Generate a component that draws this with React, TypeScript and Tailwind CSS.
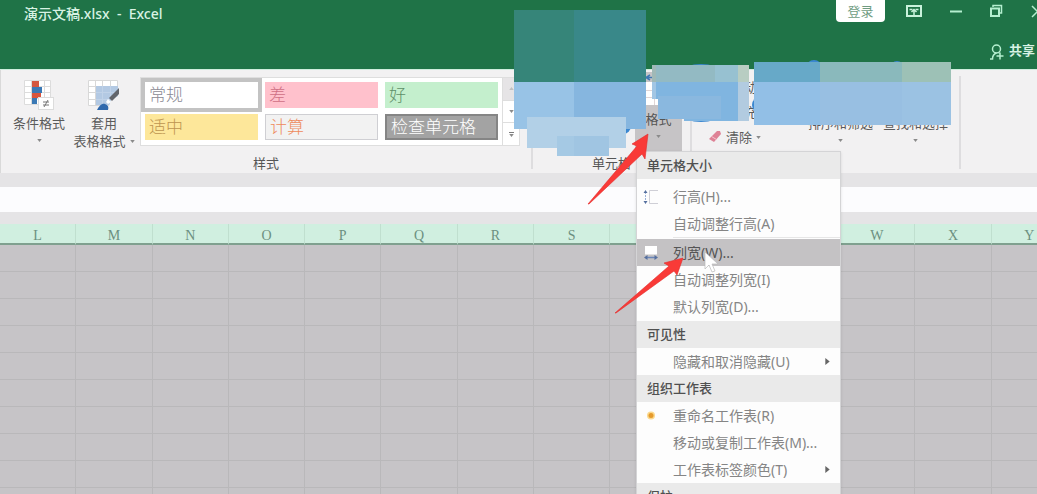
import React from 'react';

const sans = "font-['Noto_Sans','Noto_Sans_CJK_SC',sans-serif]";

const columns = ['L', 'M', 'N', 'O', 'P', 'Q', 'R', 'S', 'T', 'U', 'V', 'W', 'X', 'Y'];

const cellStyles = [
  { name: '常规', look: 'bg-white text-[#8a8a94] outline-4 outline-[#c3c3c3]' },
  { name: '差', look: 'bg-[#ffc1cc] text-[#cf6f84]' },
  { name: '好', look: 'bg-[#c4efcd] text-[#5f8f68]' },
  { name: '适中', look: 'bg-[#fde79a] text-[#bd9550]' },
  { name: '计算', look: 'border border-[#cfcfd3] bg-[#f2f2f2] text-[#ee8a5c]' },
  { name: '检查单元格', look: 'border-2 border-[#858585] bg-[#a3a3a3] text-white' },
];

function Caret() {
  return (
    <svg viewBox="0 0 6 4" className="h-[3px] w-[5px] shrink-0" aria-hidden="true">
      <path d="M0 0h6L3 4z" fill="#8a8a8a" />
    </svg>
  );
}

function ConditionalIcon() {
  return (
    <svg viewBox="0 0 30 30" className="h-[30px] w-[30px]" aria-hidden="true">
      <rect x="0.5" y="0.5" width="26" height="24" fill="#fff" />
      <path d="M0.5 .5h26v24H.5zM.5 6.5h26M.5 12.5h26M.5 18.5h26M7.5 .5v24M20.5 .5v24" fill="none" stroke="#dcdcdc" />
      <path d="M8 1h7v6H8z" fill="#d4573f" />
      <path d="M8 7h10v6H8z" fill="#3b79b5" />
      <path d="M8 13h9v5H8z" fill="#d9553d" />
      <path d="M8 18h5v6H8z" fill="#3b79b5" />
      <rect x="14.5" y="17.500" width="15" height="12" fill="#fff" stroke="#dcdcdc" />
      <path d="M19 22h6M19 25h6M24 20l-4 7" stroke="#777" fill="none" />
    </svg>
  );
}

function TableFormatIcon() {
  return (
    <svg viewBox="0 0 32 30" className="h-[30px] w-8" aria-hidden="true">
      <rect x="0.5" y="0.5" width="29" height="25" fill="#fff" />
      <path d="M.5 .5h29v25H.5zM.5 6.5h29M.5 12.5h29M.5 19.5h29M7.5 .5v25M14.5 .5v25M22.5 .5v25" fill="none" stroke="#d8d8d8" />
      <path d="M8 6h22v19H8z" fill="#b3c9e3" />
      <path d="M8 12.500h22M8 19.500h22M14.500 6v19M22.500 6v19" stroke="#c0d2e8" />
      <path d="M23 20l7-4v10h-9z" fill="#f2f1f2" />
      <path d="M31 8v6L24 21l-3-3z" fill="#63666c" />
      <path d="M20 19l3 3-3 2-2-2z" fill="#fff" />
      <path d="M9 30c2-4 5-7 8-6 3 1 4 3 3 6z" fill="#2f69ad" />
    </svg>
  );
}

function Bar({ className }: { className: string }) {
  return <div className={`w-0.5 shrink-0 bg-[#dedddf] ${className}`} />;
}

function TitleBar() {
  return (
    <header className="flex h-[69px] shrink-0 flex-col bg-[#1f7347] text-white">
      <div className="flex h-[27px] items-center pl-6">
        <h1 className="whitespace-pre text-sm font-medium text-[#d8f2e3]">演示文稿.xlsx  -  Excel</h1>
        <div className="ml-auto flex h-full items-start">
          <button className="h-[22px] w-[49px] rounded-b-sm bg-white text-[13px] leading-[22px] text-[#6f9c82]">登录</button>
          <button aria-label="功能区显示选项" className="ml-[21px] mt-1 h-4 w-4">
            <svg viewBox="0 0 16 16" fill="none" stroke="#c9f2dc">
              <rect x="1" y="2" width="14" height="10" strokeWidth="2" />
              <path d="M3.500 5.500h3M9.500 5.500h3" strokeWidth="1.500" />
              <path d="M8 5v6M5.500 8L8 5.500 10.500 8" strokeWidth="1.500" />
            </svg>
          </button>
          <button aria-label="最小化" className="ml-[27px] mt-1 h-4 w-3.5">
            <svg viewBox="0 0 14 16"><path d="M1 7.500h12" stroke="#b5efd0" strokeWidth="2" /></svg>
          </button>
          <button aria-label="还原" className="ml-[26px] mt-1 h-4 w-3.5">
            <svg viewBox="0 0 14 16" fill="none" stroke="#b5efd0" strokeWidth="2">
              <rect x="2" y="4.500" width="8" height="7.500" />
              <path d="M4 3V1.500h8.500V9H10" strokeWidth="1.500" />
            </svg>
          </button>
          <div className="w-[34px] overflow-hidden pl-7 pt-1">
            <button aria-label="关闭" className="block h-4 w-3.5">
              <svg viewBox="0 0 14 16"><path d="M1 2l11 11M12 2L1 13" stroke="#b5efd0" strokeWidth="1.500" /></svg>
            </button>
          </div>
        </div>
      </div>
      <div className="flex h-[42px] justify-end pr-0.5 pt-[13px]">
        <button className="flex h-5 items-center gap-1 text-[13px] font-bold leading-5 text-[#d8f2e3]">
          <svg viewBox="0 0 16 16" className="mt-1 h-4 w-4" fill="none" stroke="#b5efd0" strokeWidth="1.500" aria-hidden="true">
            <circle cx="7.500" cy="5" r="4" />
            <path d="M1 15h2.500c0-3 1-5 4-6M9.500 8.500l1.500 1M11 8.500v7M7.500 12h7" />
          </svg>
          共享
        </button>
      </div>
    </header>
  );
}

function StylesGroup() {
  return (
    <section className="flex h-full w-[531px] shrink-0 flex-col border-l border-[#d9d9d9]">
      <div className="flex h-[84px] shrink-0 pl-2.5 pt-[7px]">
        <button className="mt-[3px] flex w-14 flex-col items-center self-start text-[13px] leading-[18px] text-[#5b5b5b]">
          <ConditionalIcon />
          <span className="mt-1">条件格式</span>
          <span className="flex h-4 items-center"><Caret /></span>
        </button>
        <button className="ml-1 mt-[3px] flex w-[66px] flex-col items-center self-start text-[13px] leading-[18px] text-[#5b5b5b]">
          <TableFormatIcon />
          <span className="mt-1">套用</span>
          <span className="flex items-center gap-1 whitespace-nowrap">表格格式 <Caret /></span>
        </button>
        <div className="ml-[3px] flex h-[69px] w-[380px] border border-[#dedede] bg-white">
          <div className="grid flex-1 grid-cols-3 content-start gap-x-[7px] gap-y-1.5 px-1 pt-1">
            {cellStyles.map((s) => (
              <button
                key={s.name}
                className={`flex h-[26px] items-center pl-1 text-left text-[17px] font-light leading-6 ${s.look}`}
              >
                {s.name}
              </button>
            ))}
          </div>
          <div className="flex w-[17px] flex-col divide-y divide-[#dedede] border-l border-[#dedede]">
            <button aria-label="上一行" className="flex flex-1 items-center justify-center bg-[#e6e4e6]">
              <svg viewBox="0 0 6 4" className="h-[3px] w-[5px]"><path d="M0 4h6L3 0z" fill="#c0c0c0" /></svg>
            </button>
            <button aria-label="下一行" className="flex flex-1 items-center justify-center"><Caret /></button>
            <button aria-label="其他" className="flex flex-1 flex-col items-center justify-center gap-px">
              <span className="h-px w-[5px] bg-[#7d7d7d]" />
              <Caret />
            </button>
          </div>
        </div>
      </div>
      <h2 className="text-center text-[13px] leading-[19px] text-[#555]">样式</h2>
    </section>
  );
}

function CellsGroup() {
  return (
    <section className="flex h-full w-[157px] shrink-0 flex-col">
      <div className="flex h-[84px] shrink-0 justify-end pb-0.5 pr-2 pt-0.5">
        <button className="flex w-[47px] flex-col items-center bg-[#c6c4c6] text-[13px] leading-[18px] text-[#555]">
          <svg viewBox="0 0 30 32" className="mt-0.5 h-8 w-[30px]" aria-hidden="true">
            <path d="M2 8h26v23H2z" fill="#fff" />
            <path d="M2 16.500h26M2 23.500h26M10.500 8v23M19.500 8v23" stroke="#e0d6d6" />
            <path d="M2 3.500h26M6 1L2 3.500 6 6M24 1l4 2.500L24 6" fill="none" stroke="#3f78b4" strokeWidth="1.500" />
          </svg>
          <span className="mt-1">格式</span>
          <span className="flex h-4 items-center"><Caret /></span>
        </button>
      </div>
      <h2 className="text-center text-[13px] leading-[19px] text-[#555]">单元格</h2>
    </section>
  );
}

function EditingGroup() {
  return (
    <section className="flex h-full w-[267px] shrink-0 pl-4 text-[13px] leading-[18px] text-[#5b5b5b]">
      <div className="flex w-[74px] flex-col">
        <button className="flex h-[25px] items-center pl-9 pt-2">动</button>
        <button className="flex h-[25px] items-center pl-9 pt-2">充</button>
        <button className="flex h-[34px] items-center gap-1">
          <svg viewBox="0 0 14 14" className="h-3.5 w-3.5" aria-hidden="true">
            <path d="M9 1h3l1 3-7 8-5-3z" fill="#de8296" />
            <path d="M3.500 6.500l5 3" stroke="#f5c6d0" />
          </svg>
          清除
          <Caret />
        </button>
      </div>
      <div className="flex gap-2.5 pl-[26px] pt-11">
        <button className="flex flex-col items-center whitespace-nowrap">
          排序和筛选
          <span className="flex h-4 items-center"><Caret /></span>
        </button>
        <button className="flex flex-col items-center whitespace-nowrap">
          查找和选择
          <span className="flex h-4 items-center"><Caret /></span>
        </button>
      </div>
    </section>
  );
}

function MenuHeading({ children }: { children: React.ReactNode }) {
  return <h3 className="bg-[#eaeaea] pl-2.5 text-[13px] font-medium leading-[27px] text-[#505050]">{children}</h3>;
}

function MenuItem({
  label,
  icon,
  active = false,
  submenu = false,
}: {
  label: string;
  icon?: React.ReactNode;
  active?: boolean;
  submenu?: boolean;
}) {
  return (
    <button
      className={`flex h-[27px] w-full items-center whitespace-nowrap pr-2.5 text-left text-sm ${
        active ? 'bg-[#c4c2c4] text-[#555]' : 'text-[#858585]'
      }`}
    >
      <span className="flex w-9 shrink-0 pl-1.5">{icon}</span>
      {label}
      {submenu && (
        <svg viewBox="0 0 5 8" className="ml-auto h-[7px] w-[5px]" aria-hidden="true">
          <path d="M0 0l5 4-5 4z" fill="#666" />
        </svg>
      )}
    </button>
  );
}

function FormatMenu() {
  return (
    <div className="absolute left-[636px] top-[151px] w-[205px] border border-[#d4d4d6] bg-[#fdfdfd] shadow-sm">
      <MenuHeading>单元格大小</MenuHeading>
      <div className="pb-px pt-1">
        <MenuItem
          label="行高(H)..."
          icon={
            <svg viewBox="0 0 16 16" className="h-4 w-4" aria-hidden="true">
              <path d="M2.500 3v10" stroke="#9ab0d6" strokeDasharray="2 1" />
              <path d="M.5 4L2.500 1l2 3zM.5 12l2 3 2-3z" fill="#56709f" />
              <path d="M15 1.500H6.500v13H15" fill="none" stroke="#cfcfd6" />
            </svg>
          }
        />
        <MenuItem label="自动调整行高(A)" />
        <hr className="mb-px ml-9 border-[#e6e6e6]" />
        <MenuItem
          label="列宽(W)..."
          active
          icon={
            <svg viewBox="0 0 16 16" className="h-4 w-4" aria-hidden="true">
              <path d="M2 1h12v8.500H2z" fill="#fff" />
              <path d="M3 12.500h10" stroke="#6a86b8" strokeWidth="1.500" />
              <path d="M4.500 10v5L1 12.500zM11.500 10v5l3.500-2.500z" fill="#56709f" />
            </svg>
          }
        />
        <MenuItem label="自动调整列宽(I)" />
        <MenuItem label="默认列宽(D)..." />
      </div>
      <MenuHeading>可见性</MenuHeading>
      <MenuItem label="隐藏和取消隐藏(U)" submenu />
      <MenuHeading>组织工作表</MenuHeading>
      <MenuItem
        label="重命名工作表(R)"
        icon={
          <svg viewBox="0 0 16 16" className="h-4 w-4" aria-hidden="true">
            <circle cx="8" cy="7.500" r="4" fill="#fbd98d" />
            <circle cx="8" cy="7.500" r="2.500" fill="#e59a2c" />
          </svg>
        }
      />
      <MenuItem label="移动或复制工作表(M)..." />
      <MenuItem label="工作表标签颜色(T)" submenu />
      <MenuHeading>保护</MenuHeading>
    </div>
  );
}

function Sheet() {
  return (
    <div className="flex-1 overflow-hidden bg-[#c6c4c7]">
      <table className="w-[103%] table-fixed border-separate border-spacing-0">
        <thead>
          <tr>
            {columns.map((c) => (
              <th
                key={c}
                className="h-[21px] border-b-2 border-r border-b-[#7fa08f] border-r-[#c0dfcf] bg-[#d0efe0] p-0 pt-1 font-['Liberation_Serif',serif] text-sm font-normal leading-[15px] text-[#6c8f80]"
              >
                {c}
              </th>
            ))}
          </tr>
        </thead>
        <tbody>
          {Array.from({ length: 10 }, (_, r) => (
            <tr key={r}>
              {columns.map((c) => (
                <td key={c} className="h-[27px] border-b border-r border-[#b9b8ba] p-0" />
              ))}
            </tr>
          ))}
        </tbody>
      </table>
    </div>
  );
}

function Annotations() {
  return (
    <svg viewBox="0 0 1037 494" className="pointer-events-none absolute left-0 top-0 h-[494px] w-[1037px]" aria-hidden="true">
      <g fill="#3a87d0">
        <circle cx="623" cy="126" r="8" />
        <ellipse cx="701" cy="93" rx="36" ry="29" />
        <circle cx="814" cy="68" r="8" />
        <circle cx="897" cy="68" r="7" />
        <circle cx="760" cy="105" r="8" />
      </g>
      <g shapeRendering="crispEdges">
        <path d="M514 10h60v72h-60z" fill="#368579" />
        <path d="M574 10h72v72h-72z" fill="#398889" />
        <path d="M514 82h60v47h-60z" fill="#98c3e6" />
        <path d="M574 82h72v47h-72z" fill="#86b6df" />
        <path d="M527 117h99v31h-99z" fill="#b2d0e7" />
        <path d="M557 136h17v20h-17z" fill="#a5c9e4" />
        <path d="M574 136h35v20h-35z" fill="#a0c5e2" />
        <path d="M652 65h4v17h-4z" fill="#a0b9b7" />
        <path d="M656 65h59v17h-59z" fill="#93bac3" />
        <path d="M715 65h23v17h-23z" fill="#97c1d1" />
        <path d="M738 65h11v17h-11z" fill="#b8cdc2" />
        <path d="M652 82h4v17h-4z" fill="#a2c6e4" />
        <path d="M656 82h82v17h-82zM658 99h26v20h-26zM684 99h54v22h-54z" fill="#80b5e0" />
        <path d="M738 82h11v39h-11z" fill="#b2cbe0" />
        <path d="M658 96h63v23h-63z" fill="#8ab8df" />
        <path d="M754 62h66v20h-66z" fill="#67a9c8" />
        <path d="M820 62h82v20h-82z" fill="#8ab9bc" />
        <path d="M902 62h49v20h-49z" fill="#9dc1b6" />
        <path d="M754 82h66v43h-66z" fill="#92bfe6" />
        <path d="M820 82h82v43h-82z" fill="#98bfe2" />
        <path d="M902 82h49v43h-49z" fill="#9bc2e3" />
      </g>
      <path d="M705 252v17l4-4 3 7 3-1-3-7h6z" fill="#fff" stroke="#b9b9b9" strokeWidth="0.700" />
      <g fill="#f93a37" stroke="#e32a2a" strokeWidth="0.600">
        <path d="M648 134L632 144l5 2-49 58h1l53-50 3 5z" />
        <path d="M683 258L664 263l5 3-54 47h1l58-42 3 4z" />
      </g>
    </svg>
  );
}

export default function App() {
  return (
    <div className={`relative flex h-screen flex-col overflow-hidden bg-[#e5e4e6] ${sans}`}>
      <TitleBar />
      <div className="flex h-[104px] shrink-0 border-t border-[#cfeedd] bg-[#f2f1f2]">
        <StylesGroup />
        <Bar className="mb-1 mt-2" />
        <CellsGroup />
        <Bar className="mb-1 mt-2" />
        <EditingGroup />
        <Bar className="mb-1 mt-1.5" />
      </div>
      <div className="h-3.5 shrink-0" />
      <input aria-label="编辑栏" className="h-[25px] w-full shrink-0 bg-[#fcfcfe] outline-none" />
      <div className="h-3 shrink-0" />
      <Sheet />
      <FormatMenu />
      <Annotations />
    </div>
  );
}
